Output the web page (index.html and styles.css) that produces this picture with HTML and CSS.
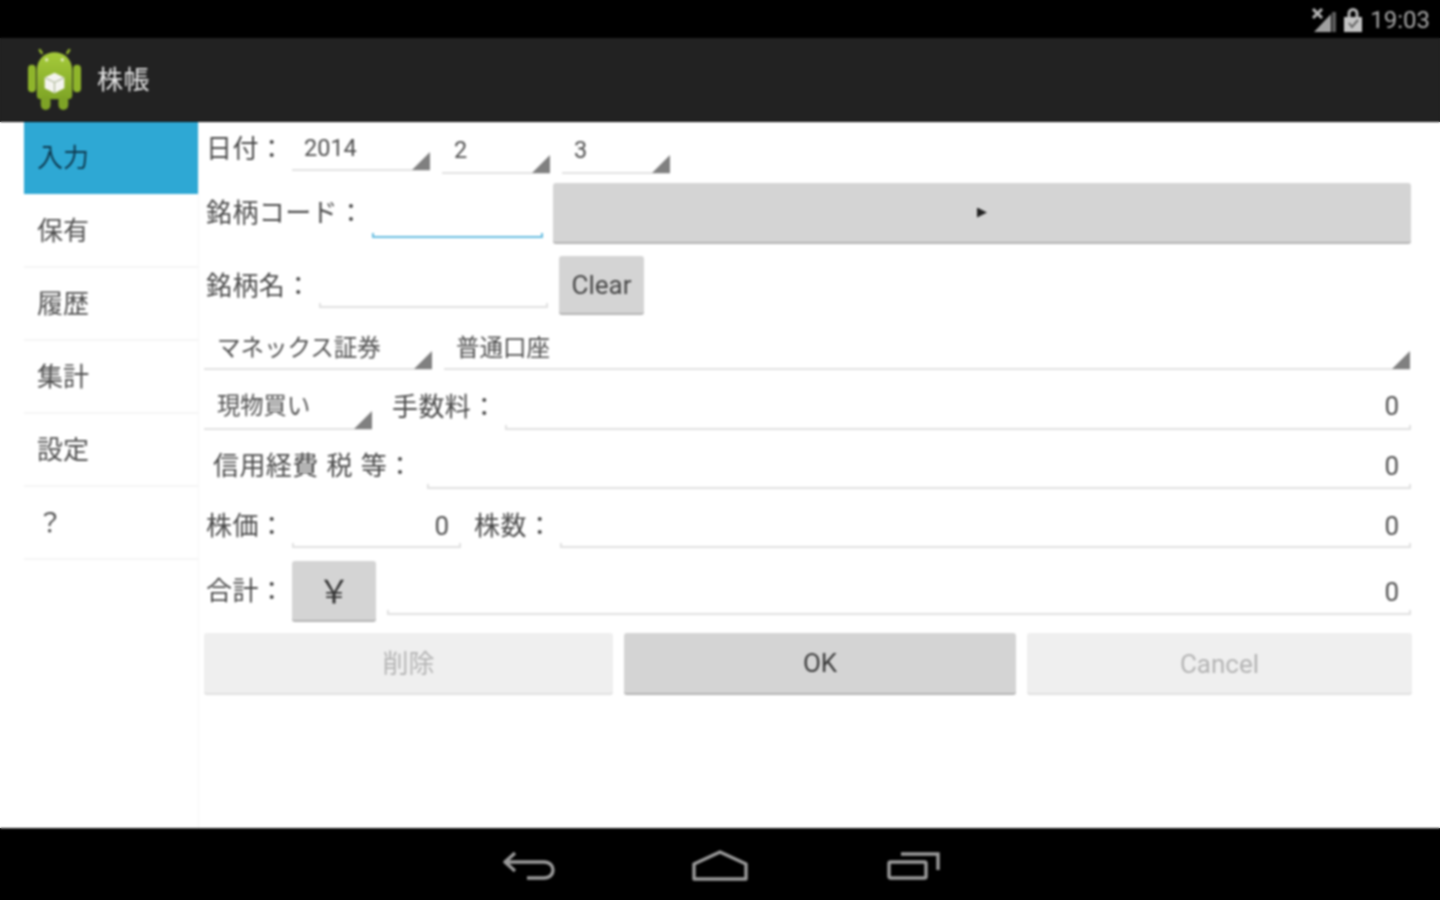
FILE: index.html
```html
<!DOCTYPE html>
<html lang="ja">
<head>
<meta charset="utf-8">
<title>株帳</title>
<link rel="stylesheet" href="styles.css">
</head>
<body>
<div class="screen">
  <header class="status">
    <svg class="ic-signal" viewBox="0 0 26 26"><path d="M3 25 L20 7 V25 Z" fill="#a0a0a0"/><path d="M2 2 L11 11 M11 2 L2 11" stroke="#b5b5b5" stroke-width="3"/><rect x="21" y="5" width="4" height="20" fill="#5c5c5c"/></svg>
    <svg class="ic-lock" viewBox="0 0 18 26"><path d="M5 10 V6.500 a4 4 0 0 1 8 0 V10" fill="none" stroke="#b5b5b5" stroke-width="3"/><path d="M0 10 H18 V25 H0 Z" fill="#c4c4c4"/><path d="M5 16 L8 20 L14 13" fill="none" stroke="#666" stroke-width="2"/></svg>
    <span class="clock">19:03</span>
  </header>
  <header class="actionbar">
    <svg class="logo" viewBox="0 0 56 66">
      <defs><linearGradient id="droid" x1="0" y1="0" x2="0" y2="1"><stop offset="0" stop-color="#a6cb3a"/><stop offset="1" stop-color="#7fa526"/></linearGradient></defs>
      <path d="M15 6 L13 3 M41 6 L43 3" stroke="#8fb02c" stroke-width="2.500" stroke-linecap="round"/>
      <path d="M10 24 C10 -1 46 -1 46 24 V49 a4 4 0 0 1 -4 4 H14 a4 4 0 0 1 -4 -4 Z" fill="url(#droid)"/>
      <circle cx="20" cy="13" r="1.800" fill="#dfe9b8"/><circle cx="36" cy="13" r="1.800" fill="#dfe9b8"/>
      <rect x="1" y="18" width="8" height="28" rx="4" fill="#8fb52b"/>
      <rect x="47" y="18" width="8" height="28" rx="4" fill="#8fb52b"/>
      <rect x="14" y="50" width="10" height="14" rx="5" fill="#7ea326"/>
      <rect x="32" y="50" width="10" height="14" rx="5" fill="#7ea326"/>
      <path d="M28 26 L38 31 V42 L28 47 L18 42 V31 Z" fill="#f4f4f0"/>
      <path d="M18 31 L28 36 L38 31 M28 36 V47" fill="none" stroke="#aeb89a" stroke-width="1.200"/>
    </svg>
    <span class="apptitle">株帳</span>
  </header>
  <main class="content">
    <nav class="side">
      <div class="tab tab-active">入力</div>
      <div class="tab">保有</div>
      <div class="tab">履歴</div>
      <div class="tab">集計</div>
      <div class="tab">設定</div>
      <div class="tab">？</div>
    </nav>
    <section class="form">
      <div class="row r1">
        <span class="label lb-date">日付：</span>
        <div class="spin sp-year">2014</div>
        <div class="spin sp-md">2</div>
        <div class="spin sp-md">3</div>
      </div>
      <div class="row r2">
        <span class="label lb-code">銘柄コード：</span>
        <div class="field fd-code"></div>
        <button class="btn bt-run"><span class="play"></span></button>
      </div>
      <div class="row r3">
        <span class="label lb-name">銘柄名：</span>
        <div class="field fd-name"></div>
        <button class="btn bt-clear">Clear</button>
      </div>
      <div class="row r4">
        <div class="spin sp-broker">マネックス証券</div>
        <div class="spin sp-account">普通口座</div>
      </div>
      <div class="row r5">
        <div class="spin sp-type">現物買い</div>
        <span class="label lb-fee">手数料：</span>
        <div class="field grow">0</div>
      </div>
      <div class="row r6">
        <span class="label lb-tax">信用経費 税 等：</span>
        <div class="field grow">0</div>
      </div>
      <div class="row r7">
        <span class="label lb-price">株価：</span>
        <div class="field fd-price">0</div>
        <span class="label lb-qty">株数：</span>
        <div class="field grow">0</div>
      </div>
      <div class="row r8">
        <span class="label lb-total">合計：</span>
        <button class="btn bt-yen">￥</button>
        <div class="field grow fd-total">0</div>
      </div>
      <div class="row r9">
        <button class="btn wide bt-del" disabled>削除</button>
        <button class="btn wide bt-ok">OK</button>
        <button class="btn wide bt-cancel" disabled>Cancel</button>
      </div>
    </section>
  </main>
  <footer class="navbar">
    <svg class="nav-back" viewBox="0 0 52 30"><path d="M12 2 L2 11 L12 20 M3 11 H41 C53 11 53 27 41 27 H24" fill="none" stroke="#9a9a9a" stroke-width="3.400" stroke-linejoin="round"/></svg>
    <svg class="nav-home" viewBox="0 0 58 32"><path d="M3 29 V14 L29 2 L55 14 V29 Z" fill="none" stroke="#9a9a9a" stroke-width="3.400" stroke-linejoin="round"/></svg>
    <svg class="nav-recent" viewBox="0 0 54 30"><rect x="2" y="11" width="37" height="16" rx="1.500" fill="none" stroke="#9a9a9a" stroke-width="3.400"/><path d="M14 3 H51 V19" fill="none" stroke="#9a9a9a" stroke-width="3.400"/></svg>
  </footer>
</div>
</body>
</html>
```

FILE: styles.css
```css
* { box-sizing: border-box; }
html, body { margin: 0; padding: 0; }
html { background: linear-gradient(#000 38px, #222 38px, #222 122px, #fff 122px, #fff 828px, #000 828px); }
.screen {
  width: 1440px; height: 900px; display: flex; flex-direction: column; overflow: hidden;
  font-family: Roboto, "Noto Sans CJK JP", sans-serif; color: #4e4e4e;
  filter: blur(0.8px);
}
.status { height: 38px; background: #000; display: flex; align-items: center; justify-content: flex-end; padding-right: 10px; padding-top: 2px; color: #a8a8a8; }
.ic-signal { width: 26px; height: 26px; margin-right: 7px; }
.ic-lock { width: 18px; height: 26px; margin-right: 8px; }
.clock { font-size: 24px; line-height: 38px; }
.actionbar { height: 84px; background: #222; border-bottom: 1px solid #111; display: flex; align-items: center; padding-left: 27px; }
.logo { width: 55px; height: 65px; }
.apptitle { margin-left: 15px; font-size: 26px; color: #e4e4e4; padding-bottom: 4px; letter-spacing: .4px; }
.content { height: 706px; background: #fff; display: flex; }
.side { width: 199px; padding-left: 24px; border-right: 1px solid #f6f6f6; flex: none; }
.tab { height: 73px; font-size: 26px; line-height: 72px; padding-left: 13px; border-bottom: 2px solid #f5f5f5; color: #505050; }
.tab-active { height: 72px; margin-bottom: 1px; background: #2ea8d4; color: #0f3a50; border-bottom: 0; }
.form { flex: none; width: 1213px; padding-left: 5px; display: flex; flex-direction: column; }
.row { display: flex; align-items: stretch; }
.r1 { height: 51px; }
.r2 { height: 61px; margin-top: 10px; }
.r3 { height: 59px; margin-top: 12px; }
.r4 { height: 45px; margin-top: 10px; }
.r5 { height: 45px; margin-top: 15px; }
.r6 { height: 44px; margin-top: 15px; }
.r7 { height: 43px; margin-top: 16px; }
.r8 { height: 61px; margin-top: 13px; }
.r9 { height: 62px; margin-top: 11px; }
.label { font-size: 26px; white-space: nowrap; color: #4a4a4a; display: flex; align-items: center; flex: none; padding-bottom: 6px; letter-spacing: .4px; }
.lb-date { width: 88px; padding-left: 2px; padding-bottom: 2px; }
.lb-code { width: 168px; padding-left: 2px; }
.lb-name { width: 115px; padding-left: 2px; padding-bottom: 4px; }
.lb-fee { width: 113px; margin-left: 20px; }
.lb-tax { width: 223px; padding-left: 9px; padding-bottom: 8px; word-spacing: 1px; }
.lb-price { width: 88px; padding-left: 2px; }
.lb-qty { width: 86px; margin-left: 13px; }
.lb-total { width: 88px; padding-left: 2px; }
.spin { position: relative; border-bottom: 2px solid #e2e2e2; padding-left: 13px; font-size: 23.500px; color: #505050; display: flex; align-items: center; padding-bottom: 2px; white-space: nowrap; }
.spin::after { content: ""; position: absolute; right: 0; bottom: -1px; width: 18px; height: 18px; background: #808080; clip-path: polygon(100% 0, 100% 100%, 0 100%); }
.r1 .spin { margin-bottom: -1px; padding-bottom: 0; padding-top: 6px; padding-left: 12px; }
.r1 .sp-year { margin-bottom: 2px; padding-top: 4px; }
.sp-year { width: 138px; }
.sp-md { width: 108px; margin-left: 12px; }
.sp-broker { width: 228px; }
.sp-account { width: 966px; margin-left: 12px; padding-left: 12px; }
.sp-type { width: 168px; padding-bottom: 6px; font-size: 23.300px; }
.field { position: relative; border-bottom: 2px solid #e0e0e0; font-size: 26px; text-align: right; padding: 0 12px 0 0; line-height: 43px; color: #505050; }
.field::before, .field::after { content: ""; position: absolute; bottom: -2px; width: 2px; height: 5px; background: #e0e0e0; }
.field::before { left: 0; }
.field::after { right: 0; }
.grow { flex: 1; margin-right: 1px; }
.fd-code { width: 171px; margin-bottom: 6px; border-bottom-color: #66bde0; }
.fd-code::before, .fd-code::after { background: #66bde0; }
.fd-name { width: 229px; margin-bottom: 7px; }
.fd-price { width: 169px; }
.fd-total { margin-left: 11px; margin-bottom: 7px; line-height: 62px; }
.btn { border: 0; border-bottom: 2px solid #b4b4b4; border-radius: 3px; background: #d4d4d4; font-family: inherit; font-size: 26px; color: #474747; padding: 0; }
.bt-run { width: 858px; margin-left: 10px; display: flex; align-items: center; justify-content: center; }
.play { width: 10px; height: 10px; background: #222; clip-path: polygon(0 0, 100% 50%, 0 100%); }
.bt-clear { width: 85px; margin-left: 11px; }
.bt-yen { width: 84px; color: #333; font-size: 32px; padding-bottom: 3px; }
.wide { flex: none; }
.bt-del { width: 409px; background: #efefef; color: #b4b4b4; border-bottom-color: #e0e0e0; padding-bottom: 3px; }
.bt-ok { width: 392px; margin-left: 11px; color: #3c3c3c; }
.bt-cancel { width: 385px; margin-left: 11px; background: #efefef; color: #b4b4b4; border-bottom-color: #e0e0e0; padding-top: 1px; }
.navbar { height: 72px; background: #000; display: flex; align-items: center; justify-content: center; padding-top: 2px; border-top: 1px solid #222; }
.nav-back { width: 52px; height: 30px; margin-left: 3px; }
.nav-home { width: 58px; height: 32px; margin-left: 136px; }
.nav-recent { width: 54px; height: 30px; margin-left: 138px; }
```
